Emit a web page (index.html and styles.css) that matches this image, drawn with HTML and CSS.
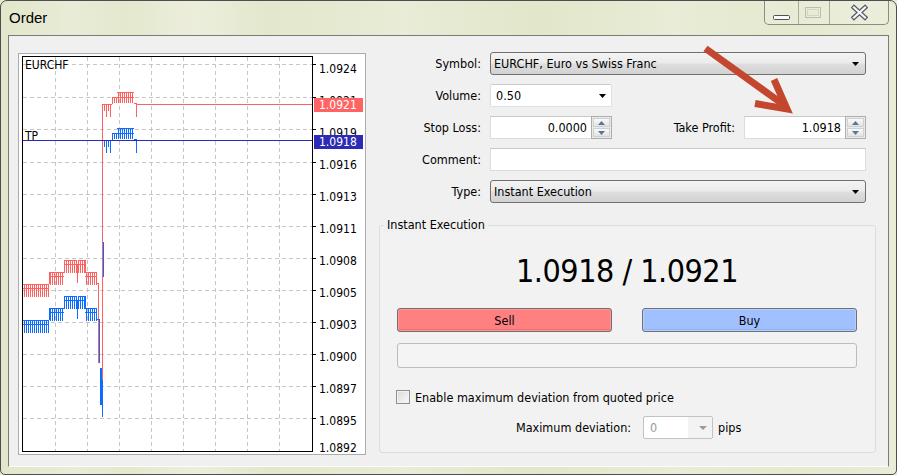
FILE: index.html
```html
<!DOCTYPE html>
<html>
<head>
<meta charset="utf-8">
<title>Order</title>
<link rel="stylesheet" href="styles.css">
</head>
<body>
<div class="window">
  <div class="titlebar">
    <div class="title">Order</div>
    <div class="caption">
      <div class="cap cap-min">
        <svg width="34" height="23" viewBox="0 0 34 23"><rect x="8.5" y="14.5" width="16" height="4" rx="1" fill="#fafafa" stroke="#4d505a"/></svg>
      </div>
      <div class="cap cap-max">
        <svg width="31" height="23" viewBox="0 0 31 23"><rect x="6.5" y="6.5" width="15" height="10" fill="none" stroke="#bcbfae"/><rect x="8.5" y="8.5" width="11" height="6" fill="none" stroke="#d3d5c6"/></svg>
      </div>
      <div class="cap cap-close">
        <svg width="58" height="23" viewBox="0 0 58 23"><path d="M24 6.5L35 16.5M35 6.5L24 16.5" stroke="#565b6a" stroke-width="4.6" stroke-linecap="square" fill="none"/><path d="M24 6.5L35 16.5M35 6.5L24 16.5" stroke="#f6f6f6" stroke-width="2.2" stroke-linecap="square" fill="none"/></svg>
      </div>
    </div>
  </div>

  <div class="client">
    <div class="chart">
      <svg class="chart-svg" width="346" height="400" viewBox="19 54 346 400">
        <defs>
          <pattern id="pr" width="2" height="10" patternUnits="userSpaceOnUse"><rect width="1" height="10" fill="#ff6161"/></pattern>
          <pattern id="pb" width="2" height="10" patternUnits="userSpaceOnUse"><rect width="1" height="10" fill="#0b6cff"/></pattern>
        </defs>
        <path class="grid" d="M23 64.5H312M23 97.5H312M23 129.5H312M23 162.5H312M23 194.5H312M23 226.5H312M23 258.5H312M23 290.5H312M23 322.5H312M23 354.5H312M23 386.5H312M23 418.5H312M55.5 57V451M87.5 57V451M119.5 57V451M151.5 57V451M183.5 57V451M215.5 57V451M247.5 57V451M279.5 57V451"/>

        <g fill="url(#pr)">
          <rect x="23" y="284" width="26" height="13"/>
          <rect x="49" y="272" width="15" height="13"/>
          <rect x="64" y="260" width="13" height="13"/>
          <rect x="78" y="260" width="7" height="13"/>
          <rect x="85" y="272" width="12" height="13"/>
          <rect x="112" y="97" width="5" height="6"/>
          <rect x="117" y="92" width="17" height="11"/>
        </g>
        <g fill="url(#pb)">
          <rect x="23" y="320" width="26" height="13"/>
          <rect x="49" y="308" width="15" height="13"/>
          <rect x="64" y="296" width="13" height="13"/>
          <rect x="78" y="296" width="7" height="13"/>
          <rect x="85" y="308" width="12" height="13"/>
          <rect x="112" y="133" width="5" height="6"/>
          <rect x="117" y="128" width="17" height="11"/>
        </g>

        <path class="red" d="M23 284.5H49M23 288.5H49M49.5 272V284M49 272.5H64M49 276.5H64M64.5 260V272M64 260.5H77M64 264.5H77M77.5 264V283M78 260.5H85M78 264.5H85M85.5 260V272M85 272.5H97M85 276.5H97M97 283.5H99M98.5 283V363M102.5 104V380M102 104.5H112M104.5 104V111M106.5 104V117M108.5 104V111M110.5 104V117M112 97.5H117M112.5 97V104M117 92.5H134M117 97.5H134M134 103.5H137M136.5 103V117M137 104.5H312"/>
        <path class="blue" d="M23 320.5H49M23 324.5H49M49.5 308V320M49 308.5H64M49 312.5H64M64.5 296V308M64 296.5H77M64 300.5H77M77.5 300V319M78 296.5H85M78 300.5H85M85.5 296V308M85 308.5H97M85 312.5H97M97 319.5H99.5M99.5 319V363M100.5 368V405M101.5 368V405M102.5 380V417M103.5 242V277M104.5 140V147M106.5 140V153M108.5 140V147M110.5 140V153M112 133.5H117M112.5 133V140M117 128.5H134M117 133.5H134M134 139.5H137M136.5 139V153"/>
        <path class="tp" d="M23 140.5H312"/>

        <rect class="plot" x="22.5" y="56.5" width="290" height="395"/>
        <path class="ticks" d="M313 64.5H316M313 97.5H316M313 129.5H316M313 162.5H316M313 194.5H316M313 226.5H316M313 258.5H316M313 290.5H316M313 322.5H316M313 354.5H316M313 386.5H316M313 418.5H316"/>

        <text class="sym" x="25" y="69">EURCHF</text>
        <text class="sym" x="25" y="140">TP</text>

        <g class="axis">
          <text x="319" y="73">1.0924</text>
          <text x="319" y="105">1.0921</text>
          <text x="319" y="137">1.0919</text>
          <text x="319" y="169">1.0916</text>
          <text x="319" y="201">1.0913</text>
          <text x="319" y="233">1.0911</text>
          <text x="319" y="265">1.0908</text>
          <text x="319" y="297">1.0905</text>
          <text x="319" y="329">1.0903</text>
          <text x="319" y="361">1.0900</text>
          <text x="319" y="393">1.0897</text>
          <text x="319" y="425">1.0895</text>
          <text x="319" y="452">1.0892</text>
        </g>
        <rect x="314" y="98" width="49" height="14" fill="#ff6464"/>
        <text class="tag" x="319" y="109">1.0921</text>
        <rect x="314" y="135" width="49" height="14" fill="#2b2bb6"/>
        <text class="tag" x="319" y="146">1.0918</text>
      </svg>
    </div>

    <div class="panel">
      <div class="form">
        <div class="row">
          <span class="lbl">Symbol:</span>
          <div class="combo wide">EURCHF, Euro vs Swiss Franc<svg class="arrow" width="7" height="4" viewBox="0 0 7 4"><path d="M0 0H7L3.5 4Z"/></svg></div>
        </div>
        <div class="row">
          <span class="lbl">Volume:</span>
          <div class="combo edit vol">0.50<svg class="arrow" width="7" height="4" viewBox="0 0 7 4"><path d="M0 0H7L3.5 4Z"/></svg></div>
        </div>
        <div class="row">
          <span class="lbl">Stop Loss:</span>
          <div class="spin">
            <div class="spin-input">0.0000</div>
            <div class="spin-btns">
              <span class="sb"><svg width="7" height="4" viewBox="0 0 7 4"><path d="M0 4H7L3.5 0Z"/></svg></span>
              <span class="sb"><svg width="7" height="4" viewBox="0 0 7 4"><path d="M0 0H7L3.5 4Z"/></svg></span>
            </div>
          </div>
          <span class="lbl2">Take Profit:</span>
          <div class="spin">
            <div class="spin-input">1.0918</div>
            <div class="spin-btns">
              <span class="sb"><svg width="7" height="4" viewBox="0 0 7 4"><path d="M0 4H7L3.5 0Z"/></svg></span>
              <span class="sb"><svg width="7" height="4" viewBox="0 0 7 4"><path d="M0 0H7L3.5 4Z"/></svg></span>
            </div>
          </div>
        </div>
        <div class="row">
          <span class="lbl">Comment:</span>
          <div class="field wide"></div>
        </div>
        <div class="row">
          <span class="lbl">Type:</span>
          <div class="combo wide">Instant Execution<svg class="arrow" width="7" height="4" viewBox="0 0 7 4"><path d="M0 0H7L3.5 4Z"/></svg></div>
        </div>
      </div>

      <div class="group">
        <span class="group-title">Instant Execution</span>
        <div class="price">1.0918 / 1.0921</div>
        <div class="actions">
          <div class="btn sell">Sell</div>
          <div class="btn buy">Buy</div>
        </div>
        <div class="status"></div>
        <div class="check-row">
          <span class="checkbox"></span>
          <span>Enable maximum deviation from quoted price</span>
        </div>
        <div class="dev-row">
          <span>Maximum deviation:</span>
          <div class="combo dis">0<svg class="arrow" width="8" height="4" viewBox="0 0 8 4"><path d="M0 0H8L4 4Z"/></svg></div>
          <span class="pips">pips</span>
        </div>
      </div>
    </div>
  </div>

  <svg class="pointer" width="100" height="75" viewBox="700 44 100 75">
    <path d="M705.5 48.5L784 105" stroke="#c3472f" stroke-width="7" fill="none"/>
    <path d="M755 103.5L787 109L774 79.5" stroke="#c3472f" stroke-width="7" fill="none" stroke-linejoin="miter" stroke-miterlimit="10"/>
  </svg>
</div>
</body>
</html>
```

FILE: styles.css
```css
* { box-sizing: border-box; }

html, body {
  margin: 0;
  padding: 0;
}

body {
  width: 897px;
  height: 475px;
  overflow: hidden;
  background: #e7eacf;
  font-family: "DejaVu Sans", sans-serif;
  font-stretch: condensed;
  font-size: 12.5px;
  color: #000;
}

.window {
  position: relative;
  width: 897px;
  height: 475px;
  border: 1px solid #4e4e4e;
  border-radius: 7px 7px 5px 5px;
  background: linear-gradient(90deg, #e2e6cb 0%, #e9ecd6 8%, #e4e8ce 14%, #eceedc 22%, #e3e7cc 30%, #e9ecd6 45%, #e2e6ca 60%, #e9ecd6 75%, #e5e9cf 88%, #e9ecd7 100%);
  display: flex;
  flex-direction: column;
  overflow: hidden;
}

.titlebar {
  height: 34px;
  flex: none;
  display: flex;
  align-items: flex-start;
}

.title {
  font-family: "Liberation Sans", Arial, sans-serif;
  font-stretch: normal;
  font-size: 15px;
  line-height: 17px;
  padding: 8px 0 0 8px;
  color: #000;
}

.caption {
  margin-left: auto;
  margin-right: 7px;
  height: 24px;
  display: flex;
  border: 1px solid #8b8e7f;
  border-top: none;
  border-radius: 0 0 5px 5px;
  background: rgba(255, 255, 255, 0.12);
  overflow: hidden;
}

.cap {
  height: 23px;
  border-right: 1px solid #a9ac9c;
}

.cap:last-child { border-right: none; }
.cap svg { display: block; }
.cap-min { width: 34px; }
.cap-max { width: 31px; }
.cap-close { width: 58px; }

.client {
  flex: none;
  margin: 0 7px;
  height: 432px;
  border: 1px solid #7a7a7a;
  border-bottom-color: #fbfbfb;
  background: #f0f0f0;
  display: flex;
  align-items: flex-start;
}

/* chart */
.chart {
  flex: none;
  margin: 17px 0 0 9px;
  width: 348px;
  height: 402px;
  border: 1px solid #acacac;
  background: #fff;
}

.chart-svg { display: block; }

.grid {
  fill: none;
  stroke: #c6c6c6;
  stroke-width: 1;
  stroke-dasharray: 4 3;
}

.red { fill: none; stroke: #ff6161; stroke-width: 1; }
.blue { fill: none; stroke: #0b6cff; stroke-width: 1; }
.tp { fill: none; stroke: #2a2ab8; stroke-width: 1; }
.plot { fill: none; stroke: #000; stroke-width: 1; }
.ticks { fill: none; stroke: #000; stroke-width: 1; }

.chart-svg text {
  font-family: "DejaVu Sans", sans-serif;
  font-stretch: condensed;
  font-size: 12px;
  fill: #000;
}

.chart-svg .tag { fill: #fff; }

/* right panel */
.panel {
  flex: none;
  margin-left: 13px;
  width: 497px;
  padding-top: 16px;
}

.form {
  width: 487px;
  display: flex;
  flex-direction: column;
  gap: 9px;
}

.row {
  display: flex;
  align-items: center;
  height: 23px;
}

.lbl {
  flex: none;
  width: 102px;
  margin-right: 9px;
  text-align: right;
}

.lbl2 {
  flex: none;
  width: 132px;
  padding-right: 9px;
  text-align: right;
}

.wide { width: 376px; }

.combo {
  height: 23px;
  display: flex;
  align-items: center;
  padding-left: 3px;
  border: 1px solid #707070;
  border-radius: 3px;
  background: linear-gradient(#f3f3f3 0%, #ebebeb 48%, #dedede 52%, #d2d2d2 100%);
  white-space: nowrap;
}

.arrow {
  display: block;
  margin-left: auto;
  margin-right: 6px;
  fill: #000;
}

.combo.edit {
  background: #fff;
  border-color: #dcdfe3;
  border-top-color: #c9ccd1;
  border-radius: 2px;
  padding-left: 5px;
}

.vol { width: 122px; }
.vol .arrow { margin-right: 5px; }

.spin {
  flex: none;
  width: 122px;
  height: 23px;
  display: flex;
}

.spin-input {
  flex: 1;
  background: #fff;
  border: 1px solid #dcdcdc;
  border-top-color: #c8c8c8;
  border-right: none;
  text-align: right;
  padding-right: 4px;
  line-height: 21px;
}

.spin-btns {
  flex: none;
  width: 21px;
  display: flex;
  flex-direction: column;
  border: 1px solid #adadad;
  background: #eaeaea;
  padding: 1px;
  gap: 1px;
}

.sb {
  flex: 1;
  display: flex;
  align-items: center;
  justify-content: center;
  background: linear-gradient(#fafafa, #e2e2e2);
  border: 1px solid #d0d0d0;
}

.sb svg {
  display: block;
  fill: #5b72a6;
}

.field {
  height: 23px;
  background: #fff;
  border: 1px solid #dcdcdc;
  border-top-color: #c8c8c8;
}

/* group */
.group {
  position: relative;
  margin-top: 22px;
  width: 497px;
  height: 228px;
  border: 1px solid #d5dfe5;
  border-radius: 3px;
  background: #f2f2f2;
  padding: 0 18px 0 17px;
  display: flex;
  flex-direction: column;
}

.group-title {
  position: absolute;
  left: 4px;
  top: -8px;
  padding: 0 3px;
  line-height: 14px;
  background: #f0f0f0;
}

.price {
  margin-top: 27px;
  height: 36px;
  line-height: 36px;
  font-size: 32px;
  letter-spacing: -0.5px;
  text-align: center;
}

.actions {
  margin-top: 19px;
  display: flex;
  justify-content: space-between;
}

.btn {
  width: 215px;
  height: 24px;
  border: 1px solid #707070;
  border-radius: 3px;
  display: flex;
  align-items: center;
  justify-content: center;
}

.sell {
  background: #ff8080;
  box-shadow: inset 0 0 0 1px #ff9595, inset 0 -2px 0 #ee6d6d;
}

.buy {
  background: #a0c0ff;
  box-shadow: inset 0 0 0 1px #b7cfff, inset 0 -2px 0 #8db0fb;
}

.status {
  margin-top: 11px;
  height: 25px;
  border: 1px solid #bcbcbc;
  border-radius: 3px;
  background: #f4f4f4;
}

.check-row {
  margin-top: 21px;
  margin-left: -1px;
  height: 16px;
  display: flex;
  align-items: center;
}

.checkbox {
  flex: none;
  width: 14px;
  height: 14px;
  margin-right: 5px;
  border: 1px solid #8e8f8f;
  background: linear-gradient(135deg, #d8d8d8, #fbfbfb);
  box-shadow: inset 0 0 0 1px #f2f2f2;
}

.dev-row {
  margin-top: 11px;
  height: 23px;
  padding-left: 119px;
  display: flex;
  align-items: center;
}

.combo.dis {
  width: 70px;
  margin-left: 12px;
  padding-left: 6px;
  border: 1px solid #c3c3c3;
  border-radius: 2px;
  background: linear-gradient(90deg, #fff 0, #fff 44px, #f3f3f3 44px);
  color: #9a9a9a;
}

.combo.dis .arrow {
  fill: #9a9a9a;
  margin-right: 5px;
}

.pips { margin-left: 5px; }

.pointer {
  position: absolute;
  left: 699px;
  top: 43px;
  overflow: visible;
}
```
